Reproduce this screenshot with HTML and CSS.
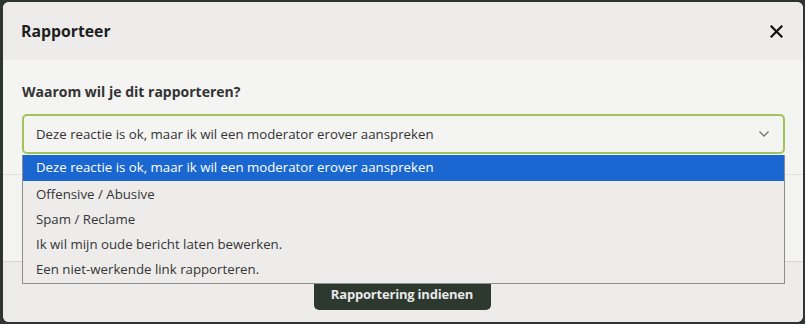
FILE: index.html
```html
<!DOCTYPE html>
<html lang="nl">
<head>
<meta charset="utf-8">
<title>Rapporteer</title>
<link rel="stylesheet" href="styles.css">
</head>
<body>
<div class="modal">
  <div class="modal-header">
    <h2 class="modal-title">Rapporteer</h2>
    <button class="close" aria-label="Sluiten">
      <svg width="13" height="13" viewBox="0 0 13 13"><path d="M1.5 1.5 L11.5 11.5 M11.5 1.5 L1.5 11.5" stroke="#111" stroke-width="2.2" stroke-linecap="square" fill="none"/></svg>
    </button>
  </div>
  <div class="modal-body">
    <label class="label">Waarom wil je dit rapporteren?</label>
    <div class="select-wrap">
      <div class="select">
        <span>Deze reactie is ok, maar ik wil een moderator erover aanspreken</span>
        <svg class="chev" width="12" height="8" viewBox="0 0 12 8"><path d="M1.5 1.5 L6 6 L10.5 1.5" stroke="#777" stroke-width="1.4" fill="none"/></svg>
      </div>
      <ul class="dropdown">
        <li class="opt active">Deze reactie is ok, maar ik wil een moderator erover aanspreken</li>
        <li class="opt">Offensive / Abusive</li>
        <li class="opt">Spam / Reclame</li>
        <li class="opt">Ik wil mijn oude bericht laten bewerken.</li>
        <li class="opt">Een niet-werkende link rapporteren.</li>
      </ul>
    </div>
  </div>
  <div class="modal-extra"></div>
  <div class="modal-footer">
    <button class="submit">Rapportering indienen</button>
  </div>
</div>
</body>
</html>
```
FILE: styles.css
```css
* { box-sizing: border-box; }
html, body { margin: 0; height: 100%; }
body {
  background: #2e3530;
  padding: 2px 2px 2px 3px;
  font-family: "Open Sans", "Noto Sans", sans-serif;
  color: #333;
}
.modal {
  width: 800px;
  height: 320px;
  border-radius: 6px;
  background: #edecea;
  display: flex;
  flex-direction: column;
  overflow: hidden;
}
.modal-header {
  height: 58px;
  flex: none;
  display: flex;
  align-items: center;
  justify-content: space-between;
  padding: 0 20px 0 18px;
  background: #edecea;
}
.modal-title {
  margin: 0;
  font-size: 15.8px;
  font-weight: 700;
  color: #1e1e1e;
}
.close {
  border: 0;
  background: none;
  padding: 0;
  display: flex;
  cursor: pointer;
}
.modal-body {
  background: #f4f4f3;
  padding: 22px 18px 20px 19px;
  display: flex;
  flex-direction: column;
  gap: 12px;
}
.label {
  font-size: 14px;
  font-weight: 700;
  line-height: 20px;
  color: #333;
}
.select-wrap { position: relative; }
.select {
  height: 40px;
  border: 2px solid #a3c25a;
  border-radius: 5px;
  background: #f4f4f3;
  display: flex;
  align-items: center;
  justify-content: space-between;
  padding: 0 13px 0 12px;
  font-size: 13.25px;
  color: #333;
}
.chev { flex: none; }
.dropdown {
  position: absolute;
  left: 0;
  right: 0;
  top: 41px;
  margin: 0;
  padding: 0 0 2px;
  list-style: none;
  background: #edeceb;
  border: 1px solid #8d8d8d;
  border-top: 0;
  z-index: 5;
  font-size: 13.25px;
}
.opt {
  height: 25px;
  line-height: 27px;
  padding-left: 13px;
  color: #353535;
}
.opt.active {
  height: 26px;
  line-height: 25px;
  background: #1a67d1;
  color: #fff;
}
.modal-extra {
  height: 88px;
  flex: none;
  background: #f3f3f2;
  border-top: 1px solid #e1e0de;
  border-bottom: 1px solid #d6d5d3;
}
.modal-footer {
  flex: 1;
  display: flex;
  justify-content: center;
  align-items: flex-start;
  padding-top: 16px;
  background: #edecea;
}
.submit {
  height: 32px;
  width: 177px;
  margin-left: -2px;
  border: 0;
  border-radius: 5px;
  background: #2d382f;
  color: #e8e8e8;
  font-family: "Open Sans", "Noto Sans", sans-serif;
  font-size: 13px;
  font-weight: 700;
  letter-spacing: -0.2px;
}
```
